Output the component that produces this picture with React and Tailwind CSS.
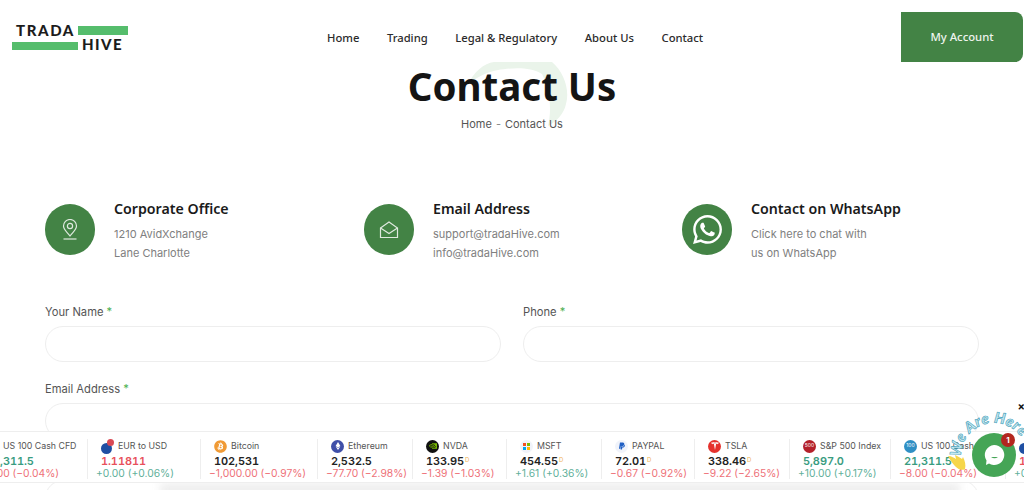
import { FaWhatsapp, FaBitcoin, FaEthereum, FaPaypal } from 'react-icons/fa';
import { SiNvidia, SiTesla } from 'react-icons/si';

const headFont = "font-['Noto_Sans','Open_Sans',sans-serif]";
const bodyFont = "font-['Inter','Noto_Sans',sans-serif]";

const navLinks = ['Home', 'Trading', 'Legal & Regulatory', 'About Us', 'Contact'];

function PinIcon() {
  return (
    <svg width="18" height="22" viewBox="0 0 18 22" fill="none" stroke="#dfe9df" strokeWidth="1.2">
      <path d="M9 17 C6 13 2.5 10.5 2.5 7 A6.5 6.5 0 0 1 15.5 7 C15.5 10.5 12 13 9 17 Z" />
      <circle cx="9" cy="7" r="2.6" />
      <path d="M2.5 20 H15.5" />
    </svg>
  );
}

function MailIcon() {
  return (
    <svg width="20" height="18" viewBox="0 0 20 18" fill="none" stroke="#dfe9df" strokeWidth="1.2">
      <path d="M1.5 7 L10 1 L18.5 7 V16.5 H1.5 Z" />
      <path d="M1.5 7 L10 12.5 L18.5 7" />
    </svg>
  );
}

const infoCards = [
  { title: 'Corporate Office', lines: ['1210 AvidXchange', 'Lane Charlotte'], icon: <PinIcon />, width: 'w-[319px]' },
  { title: 'Email Address', lines: ['support@tradaHive.com', 'info@tradaHive.com'], icon: <MailIcon />, width: 'w-[318px]' },
  { title: 'Contact on WhatsApp', lines: ['Click here to chat with', 'us on WhatsApp'], icon: <FaWhatsapp className="text-[33px] text-white" />, width: 'w-[298px]' },
];

function Logo() {
  return (
    <div className="flex w-[116px] flex-col font-['Lato',sans-serif] text-[15px] font-black leading-[11px] text-[#1c1c1c]">
      <div className="flex items-center">
        <span className="w-[66px] whitespace-nowrap pl-[4px] tracking-[1.6px]">TRADA</span>
        <span className="h-[9px] w-[50px] bg-[#55bd6c]"></span>
      </div>
      <div className="mt-[3px] flex items-end">
        <span className="h-[8px] w-[66px] bg-[#55bd6c]"></span>
        <span className="pl-[4px] tracking-[1.4px]">HIVE</span>
      </div>
    </div>
  );
}

function FormField({ label, className }) {
  return (
    <div className={className}>
      <label className="block text-[11.2px] leading-[18px] text-[#555]">
        {label} <span className="text-[#4caf50]">*</span>
      </label>
      <div className="mt-[5px] h-[36px] rounded-[18px] border border-[#eeeeee] bg-white"></div>
    </div>
  );
}

function Sup() {
  return <sup className="ml-[1px] text-[6px] font-normal text-[#f0b35a]">D</sup>;
}

const eurIcon = (
  <span className="relative block h-[15px] w-[13px]">
    <span className="absolute bottom-0 left-0 h-[11px] w-[11px] rounded-full bg-[#1f4fa3]"></span>
    <span className="absolute right-0 top-0 h-[7px] w-[7px] rounded-full bg-[#d94a55]"></span>
  </span>
);

const tickers = [
  { w: 'w-[115px]', label: 'US 100 Cash CFD', value: '21,311.5', tone: 'green', change: '−8.00 (−0.04%)', down: true, icon: <span className="flex h-[13px] w-[13px] items-center justify-center rounded-full bg-[#2f8fc4] text-[5px] text-white">100</span> },
  { w: 'w-[113px]', label: 'EUR to USD', value: '1.11811', tone: 'red', change: '+0.00 (+0.06%)', icon: eurIcon },
  { w: 'w-[117px]', label: 'Bitcoin', value: '102,531', change: '−1,000.00 (−0.97%)', down: true, icon: <FaBitcoin className="text-[13px] text-[#f09a35]" /> },
  { w: 'w-[95px]', label: 'Ethereum', value: '2,532.5', change: '−77.70 (−2.98%)', down: true, icon: <span className="flex h-[13px] w-[13px] items-center justify-center rounded-full bg-[#3f4fa8]"><FaEthereum className="text-[8px] text-white" /></span> },
  { w: 'w-[94px]', label: 'NVDA', value: '133.95', sup: true, change: '−1.39 (−1.03%)', down: true, icon: <span className="flex h-[13px] w-[13px] items-center justify-center rounded-full bg-[#111]"><SiNvidia className="text-[8px] text-[#76b900]" /></span> },
  { w: 'w-[95px]', label: 'MSFT', value: '454.55', sup: true, change: '+1.61 (+0.36%)', icon: (
    <span className="flex h-[13px] w-[13px] items-center justify-center rounded-full bg-[#f0f3fa]">
      <span className="grid h-[7px] w-[7px] grid-cols-2 gap-px">
        <span className="bg-[#f25022]"></span><span className="bg-[#7fba00]"></span>
        <span className="bg-[#00a4ef]"></span><span className="bg-[#ffb900]"></span>
      </span>
    </span>
  ) },
  { w: 'w-[93px]', label: 'PAYPAL', value: '72.01', sup: true, change: '−0.67 (−0.92%)', down: true, icon: <span className="flex h-[13px] w-[13px] items-center justify-center rounded-full bg-[#f0f3fa]"><FaPaypal className="text-[8px] text-[#1f5fc4]" /></span> },
  { w: 'w-[95px]', label: 'TSLA', value: '338.46', sup: true, change: '−9.22 (−2.65%)', down: true, icon: <span className="flex h-[13px] w-[13px] items-center justify-center rounded-full bg-[#e5322d]"><SiTesla className="text-[8px] text-white" /></span> },
  { w: 'w-[101px]', label: 'S&P 500 Index', value: '5,897.0', tone: 'green', change: '+10.00 (+0.17%)', icon: <span className="flex h-[13px] w-[13px] items-center justify-center rounded-full bg-[#b3202a] text-[5px] text-white">500</span> },
  { w: 'w-[115px]', label: 'US 100 Cash CFD', value: '21,311.5', tone: 'green', change: '−8.00 (−0.04%)', down: true, icon: <span className="flex h-[13px] w-[13px] items-center justify-center rounded-full bg-[#2f8fc4] text-[5px] text-white">100</span> },
  { w: 'w-[113px]', label: 'EUR to USD', value: '1.11811', tone: 'red', change: '+0.00 (+0.06%)', icon: eurIcon },
];

function TickerItem({ item, last }) {
  const valueColor = item.tone === 'green' ? 'text-[#3a9c7f]' : item.tone === 'red' ? 'text-[#e8505b]' : 'text-[#222]';
  return (
    <div className={`${item.w} shrink-0 pl-[13px] ${last ? '' : 'border-r border-[#eeeeee]'}`}>
      <div className="flex h-[14px] items-center gap-[4px] whitespace-nowrap text-[8.8px] text-[#555]">
        {item.icon}
        <span>{item.label}</span>
      </div>
      <div className={`mt-[2px] h-[13px] whitespace-nowrap text-[11px] font-semibold leading-[13px] tracking-[-0.1px] tabular-nums ${valueColor}`}>
        {item.value}{item.sup && <Sup />}
      </div>
      <div className={`-ml-[5px] h-[11px] whitespace-nowrap text-[10.3px] leading-[11px] ${item.down ? 'text-[#ee7077]' : 'text-[#5fb09a]'}`}>
        {item.change}
      </div>
    </div>
  );
}

function ChatWidget() {
  return (
    <div className="absolute left-[940px] top-[398px] h-[84px] w-[84px]">
      <span className="absolute right-[-1px] top-[3px] text-[11px] font-bold leading-none text-[#111]">×</span>
      <svg className="absolute left-0 top-0" width="84" height="84" viewBox="0 0 84 84">
        <defs>
          <path id="chat-arc" d="M21 59 A33 33 0 0 1 87 57" />
        </defs>
        <text fontFamily="Lato, sans-serif" fontSize="15" fontWeight="900" fontStyle="italic" fill="#c4e8f0" stroke="#3f9db8" strokeWidth="0.6" letterSpacing="0.4">
          <textPath href="#chat-arc">We Are Here</textPath>
        </text>
        {/* hand */}
        <path d="M8 58 C12 58 14 60 16 61 L15 57 C18 58 20 60 22 61 L23 59 C25 63 26 67 25 71 C20 74 14 69 8 58 Z" fill="#f6d64a" />
      </svg>
      <div className="absolute left-[32px] top-[35px] flex h-[44px] w-[44px] items-center justify-center rounded-full bg-[#45a556]">
        <svg width="26" height="26" viewBox="0 0 26 26">
          <path d="M13 3 A10 10 0 1 1 8 21.5 L5 23 L5.5 18.5 A10 10 0 0 1 13 3 Z" fill="#fff" />
          <path d="M10 15 Q13.5 17.5 17 15 Z" fill="#45a556" />
        </svg>
      </div>
      <span className="absolute left-[61px] top-[35px] flex h-[14px] w-[14px] items-center justify-center rounded-full bg-[#b3261e] text-[8px] font-bold text-white">1</span>
    </div>
  );
}

export default function App() {
  return (
    <div className={`relative h-[490px] w-[1024px] overflow-hidden bg-white ${bodyFont}`}>
      {/* header */}
      <header className="flex h-[62px] items-start">
        <div className="ml-[12px] mt-[25px]"><Logo /></div>
        <nav className={`ml-[199px] mt-[29px] flex gap-[27.5px] text-[11.25px] font-medium leading-[17px] text-[#2b2b2b] ${headFont}`}>
          {navLinks.map(link => <a key={link}>{link}</a>)}
        </nav>
        <a className={`ml-auto mr-px mt-[12px] flex h-[50px] w-[122px] items-center justify-center rounded-r-[8px] bg-[#438345] pt-[1px] text-[11.3px] font-medium text-[#eef4ee] ${headFont}`}>
          My Account
        </a>
      </header>

      {/* page title */}
      <section className="relative flex h-[80px] flex-col items-center">
        <svg className="absolute left-[466px] top-0" width="104" height="64" viewBox="0 0 104 64">
          <path d="M2 22 C8 10 18 1 28 0 L86 0 C98 10 104 28 100 42 C98 52 90 60 82 64 C86 48 84 28 76 12 C64 4 44 6 32 8 C20 10 10 16 2 22 Z" fill="#eaf4ea" />
        </svg>
        <h1 className={`relative text-[38.5px] font-bold leading-[48px] text-[#141414] ${headFont}`}>Contact Us</h1>
        <p className="relative mt-[6px] text-[11px] leading-[16px] text-[#555]">
          Home<span className="mx-[4px] text-[#888]">-</span>Contact Us
        </p>
      </section>

      {/* info cards */}
      <section className="ml-[45px] mt-[62px] flex">
        {infoCards.map(card => (
          <div key={card.title} className={`flex ${card.width} gap-[19px]`}>
            <div className="flex h-[51px] w-[50px] shrink-0 items-center justify-center rounded-full bg-[#438345]">
              {card.icon}
            </div>
            <div className="-mt-[5px]">
              <h3 className={`text-[14.2px] font-semibold leading-[20px] text-[#1a1a1a] ${headFont}`}>{card.title}</h3>
              <div className="mt-[6px] text-[11px] leading-[19px] text-[#808080]">
                {card.lines.map(line => <p key={line}>{line}</p>)}
              </div>
            </div>
          </div>
        ))}
      </section>

      {/* form */}
      <form className="mx-[45px] mt-[40px] flex flex-col gap-[18px]">
        <div className="flex gap-[22px]">
          <FormField label="Your Name" className="flex-1" />
          <FormField label="Phone" className="flex-1" />
        </div>
        <FormField label="Email Address" />
        <FormField label="Message" />
      </form>

      <div className="absolute left-[160px] top-[484px] h-[10px] w-[800px] bg-[#ebebeb] blur-[4px]"></div>

      {/* ticker tape stuck to the bottom of the window */}
      <div className="absolute left-0 top-[431px] flex h-[52px] w-[1024px] items-start overflow-hidden border-y border-[#eeeeee] bg-white pt-[7px]">
        <div className="-ml-[27px] flex">
          {tickers.map((item, i) => <TickerItem key={i} item={item} last={i === tickers.length - 1} />)}
        </div>
      </div>

      <ChatWidget />
    </div>
  );
}
